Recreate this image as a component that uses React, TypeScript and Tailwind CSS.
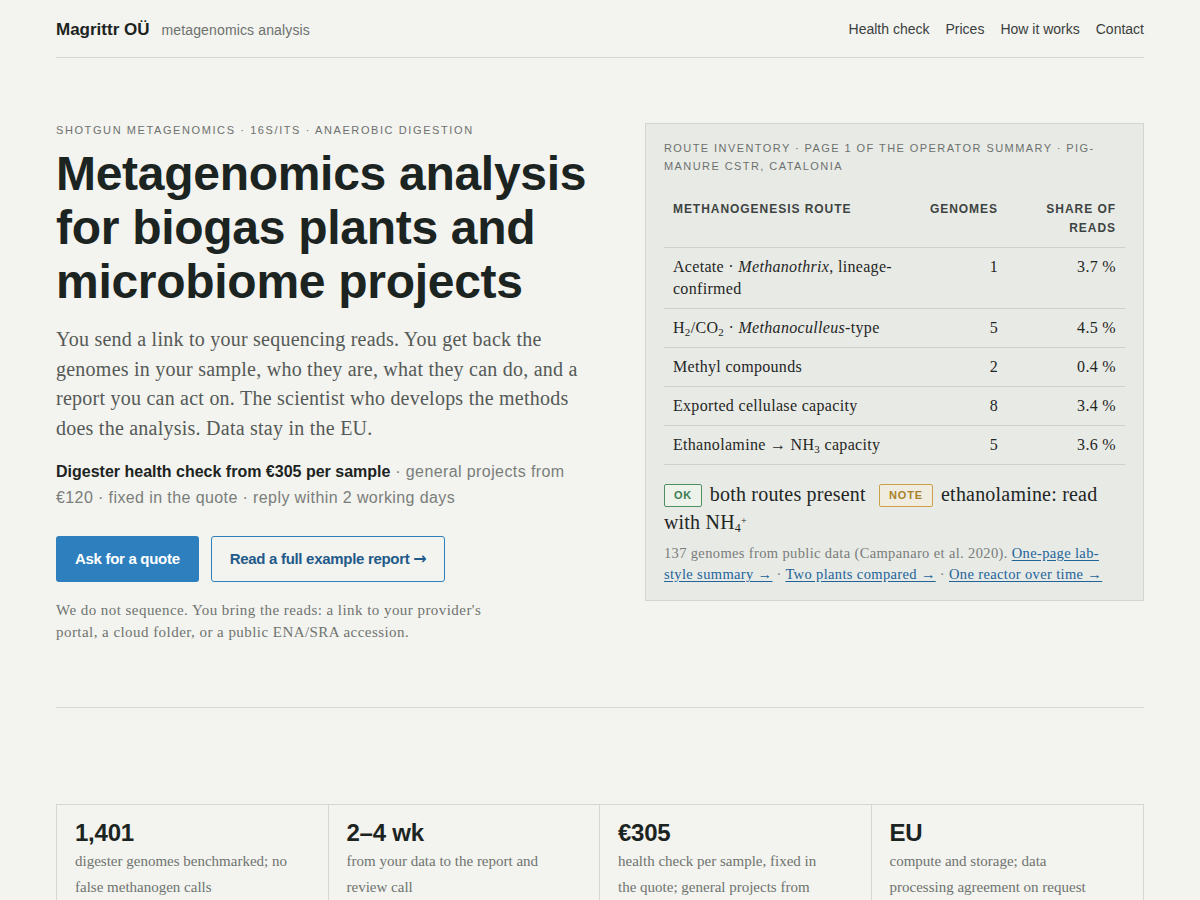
import React from "react";

const sans = { fontFamily: '"Liberation Sans", Arial, sans-serif' };
const serif = { fontFamily: '"Liberation Serif", "Times New Roman", serif' };

function Header() {
  return (
    <header className="flex h-[58px] items-center justify-between border-b border-[#d6d7d2] pt-[2px]">
      <div className="flex items-baseline gap-3">
        <span className="text-[17px] font-bold text-[#1c2422]">Magrittr OÜ</span>
        <span className="text-[14px] tracking-[0.01em] text-[#6d716e]">metagenomics analysis</span>
      </div>
      <nav className="flex items-center gap-4 text-[14px] text-[#3a403d]">
        <a>Health check</a>
        <a>Prices</a>
        <a>How it works</a>
        <a>Contact</a>
      </nav>
    </header>
  );
}

const sub = "text-[11px]";

const rows: { route: React.ReactNode; g: string; s: string }[] = [
  {
    route: (
      <>
        Acetate · <i>Methanothrix</i>, lineage-confirmed
      </>
    ),
    g: "1",
    s: "3.7 %",
  },
  {
    route: (
      <>
        H<sub className={sub}>2</sub>/CO<sub className={sub}>2</sub> · <i>Methanoculleus</i>-type
      </>
    ),
    g: "5",
    s: "4.5 %",
  },
  { route: <>Methyl compounds</>, g: "2", s: "0.4 %" },
  { route: <>Exported cellulase capacity</>, g: "8", s: "3.4 %" },
  {
    route: (
      <>
        Ethanolamine → NH<sub className={sub}>3</sub> capacity
      </>
    ),
    g: "5",
    s: "3.6 %",
  },
];

function Card() {
  return (
    <div className="mt-[1px] border border-[#d3d5d0] bg-[#e8eae6] px-[18px] pb-[15px] pt-[15px]">
      <div className="text-[11px] uppercase leading-[18px] tracking-[0.13em] text-[#6d716e]" style={sans}>
        Route inventory · page 1 of the operator summary · pig-manure CSTR, Catalonia
      </div>
      <table className="mt-[15px] w-full table-fixed border-collapse">
        <thead>
          <tr className="border-b border-[#cfd1cc]">
            <th className="px-[9px] py-[9.5px] text-left align-top text-[12px] font-bold uppercase leading-[19px] tracking-[0.08em] text-[#3d4441]" style={sans}>
              Methanogenesis route
            </th>
            <th className="w-[88px] px-[9px] py-[9.5px] text-right align-top text-[12px] font-bold uppercase leading-[19px] tracking-[0.08em] text-[#3d4441]" style={sans}>
              Genomes
            </th>
            <th className="w-[118px] px-[9px] py-[9.5px] text-right align-top text-[12px] font-bold uppercase leading-[19px] tracking-[0.08em] text-[#3d4441]" style={sans}>
              Share of reads
            </th>
          </tr>
        </thead>
        <tbody>
          {rows.map((r, i) => (
            <tr key={i} className="border-b border-[#cfd1cc] text-[16px] leading-[22px] tracking-[0.02em] text-[#1f2624]" style={serif}>
              <td className="px-[9px] py-2 align-top">{r.route}</td>
              <td className="px-[9px] py-2 text-right align-top">{r.g}</td>
              <td className="px-[9px] py-2 text-right align-top">{r.s}</td>
            </tr>
          ))}
        </tbody>
      </table>
      <p className="mt-[15px] text-[20px] leading-[28px] tracking-[0.01em] text-[#1f2624]" style={serif}>
        <span className="mr-2 inline-block rounded-[2px] border border-[#4f8f62] bg-[#edf2eb] px-[9px] align-[2px] text-[11px] font-bold leading-[21px] tracking-[0.06em] text-[#3c7d50]" style={sans}>
          OK
        </span>
        both routes present{" "}
        <span className="mx-2 inline-block rounded-[2px] border border-[#c9a24a] bg-[#f0ece0] px-[9px] align-[2px] text-[11px] font-bold leading-[21px] tracking-[0.08em] text-[#a8822a]" style={sans}>
          NOTE
        </span>
        ethanolamine: read with NH<sub className="text-[12px]">4</sub>
        <sup className="text-[10px]">+</sup>
      </p>
      <p className="mt-[7px] text-[14.5px] leading-[21px] tracking-[0.025em] text-[#797d7a]" style={serif}>
        137 genomes from public data (Campanaro et al. 2020).{" "}
        <a className="text-[#22649a] underline underline-offset-2">One-page lab-style summary →</a> ·{" "}
        <a className="text-[#22649a] underline underline-offset-2">Two plants compared →</a> ·{" "}
        <a className="text-[#22649a] underline underline-offset-2">One reactor over time →</a>
      </p>
    </div>
  );
}

const arrow = { fontFamily: '"DejaVu Sans", sans-serif' };

function Hero() {
  return (
    <section className="grid grid-cols-[1.1fr_1fr] items-start gap-10 pb-16 pt-16">
      <div>
        <div className="text-[11px] uppercase leading-4 tracking-[0.145em] text-[#6d716e]">
          Shotgun metagenomics · 16S/ITS · Anaerobic digestion
        </div>
        <h1 className="mt-[9px] text-[48px] font-bold leading-[54px] tracking-[-0.006em] text-[#1c2422]">
          Metagenomics analysis for biogas plants and microbiome projects
        </h1>
        <p className="mt-[16px] text-[20px] leading-[29.5px] tracking-[0.012em] text-[#555a57]" style={serif}>
          You send a link to your sequencing reads. You get back the genomes in your sample, who they are, what they can do, and a report you can act on. The scientist who develops the methods does the analysis. Data stay in the EU.
        </p>
        <p className="mt-[16px] text-[16px] leading-[26px] text-[#7a7e7b]">
          <span className="font-bold text-[#1c2422]">Digester health check from €305 per sample</span>
          <span className="tracking-[0.025em]"> · general projects from €120 · fixed in the quote · reply within 2 working days</span>
        </p>
        <div className="mt-[25px] flex gap-3">
          <a className="flex h-[46px] items-center rounded-[3px] bg-[#2e7fbd] px-[19px] text-[15px] font-bold tracking-[-0.02em] text-white">
            Ask for a quote
          </a>
          <a className="flex h-[46px] items-center rounded-[3px] border border-[#2e7fbd] px-[18px] text-[15px] font-bold tracking-[-0.02em] text-[#1f5a8a]">
            Read a full example report&nbsp;<span className="text-[16px] font-bold" style={arrow}>→</span>
          </a>
        </div>
        <p className="mt-[17px] max-w-[440px] text-[15px] leading-[22px] tracking-[0.03em] text-[#6f7370]" style={serif}>
          We do not sequence. You bring the reads: a link to your provider's portal, a cloud folder, or a public ENA/SRA accession.
        </p>
      </div>
      <Card />
    </section>
  );
}

const stats = [
  { n: "1,401", d: "digester genomes benchmarked; no false methanogen calls" },
  { n: "2–4 wk", d: "from your data to the report and review call" },
  { n: "€305", d: "health check per sample, fixed in the quote; general projects from €120" },
  { n: "EU", d: "compute and storage; data processing agreement on request" },
];

function Stats() {
  return (
    <section className="pt-24">
      <div className="grid grid-cols-4 border border-[#d6d7d2]">
        {stats.map((s, i) => (
          <div key={i} className={"px-[18px] pb-5 pt-[13px] " + (i < 3 ? "border-r border-[#d6d7d2]" : "")}>
            <div className="text-[24px] font-bold leading-[30px] tracking-[-0.01em] text-[#1c2422]">{s.n}</div>
            <div className="max-w-[217px] text-[15px] leading-[26px] text-[#6f7370]" style={serif}>
              {s.d}
            </div>
          </div>
        ))}
      </div>
    </section>
  );
}

export default function App() {
  return (
    <div className="min-h-screen bg-[#f3f3ef]" style={sans}>
      <div className="mx-auto w-[1088px]">
        <Header />
        <Hero />
        <div className="border-t border-[#d6d7d2]" />
        <Stats />
      </div>
    </div>
  );
}
